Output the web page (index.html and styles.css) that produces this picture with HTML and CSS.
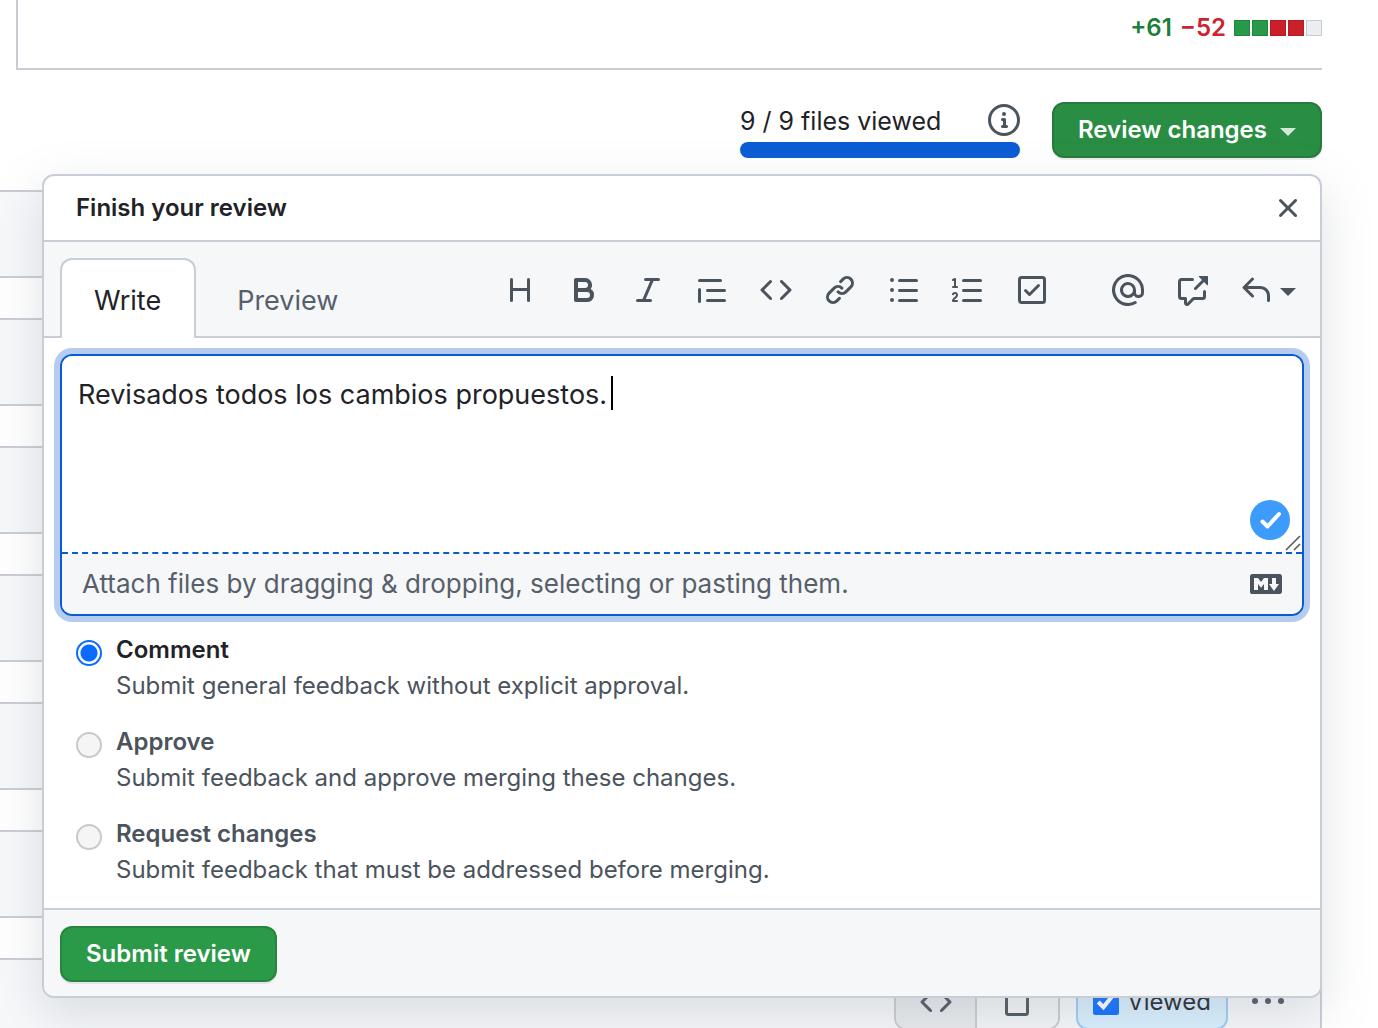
FILE: index.html
```html
<!DOCTYPE html>
<html lang="en">
<head>
<meta charset="utf-8">
<meta name="viewport" content="width=device-width, initial-scale=1">
<title>Finish your review</title>
<link rel="stylesheet" href="styles.css">
</head>
<body>
<main class="page">
  <section class="summary">
    <div class="diffstat">
      <span class="added">+61</span>
      <span class="removed">−52</span>
      <span class="blocks"><i class="block block-add"></i><i class="block block-add"></i><i class="block block-del"></i><i class="block block-del"></i><i class="block"></i></span>
    </div>
  </section>

  <div class="toolbar">
    <div class="progress">
      <div class="progress-text">
        <span class="progress-label">9 / 9 files viewed</span>
        <svg class="icon" viewBox="0 0 16 16"><path d="M0 8a8 8 0 1 1 16 0A8 8 0 0 1 0 8Zm8-6.500a6.500 6.500 0 1 0 0 13 6.500 6.500 0 0 0 0-13ZM6.500 7.750A.75.75 0 0 1 7.250 7h1a.75.75 0 0 1 .75.75v2.750h.25a.75.75 0 0 1 0 1.500h-2a.75.75 0 0 1 0-1.500h.25v-2h-.25a.75.75 0 0 1-.75-.75ZM8 6a1 1 0 1 1 0-2 1 1 0 0 1 0 2Z"/></svg>
      </div>
      <div class="progress-bar"></div>
    </div>
    <button class="btn btn-review" type="button">Review changes<span class="caret"></span></button>
  </div>

  <div class="files">
    <div class="file"></div>
    <div class="file"></div>
    <div class="file"></div>
    <div class="file"></div>
    <div class="file"></div>
    <div class="file"></div>
    <div class="file file-open">
      <div class="view-switch">
        <button class="view-button selected" type="button" aria-label="Source"><svg class="icon" viewBox="0 0 16 16"><path d="m11.280 3.220 4.250 4.250a.75.75 0 0 1 0 1.060l-4.250 4.250a.749.749 0 0 1-1.275-.326.749.749 0 0 1 .215-.734L13.940 8l-3.720-3.720a.749.749 0 0 1 .326-1.275.749.749 0 0 1 .734.215Zm-6.560 0a.751.751 0 0 1 1.042.018.751.751 0 0 1 .018 1.042L2.060 8l3.720 3.720a.749.749 0 0 1-.326 1.275.749.749 0 0 1-.734-.215L.47 8.530a.75.75 0 0 1 0-1.060Z"/></svg></button>
        <button class="view-button" type="button" aria-label="Rendered"><svg class="icon" viewBox="0 0 16 16"><path fill="none" stroke="currentColor" stroke-width="1.500" d="M3.750.75h5.500l4 4v8.500a1 1 0 0 1-1 1h-8.500a1 1 0 0 1-1-1v-11.500a1 1 0 0 1 1-1Z"/></svg></button>
      </div>
      <label class="viewed"><input class="tick" type="checkbox" checked>Viewed</label>
      <button class="tool" type="button" aria-label="More options"><svg class="icon" viewBox="0 0 16 16"><path d="M8 9a1.500 1.500 0 1 0 0-3 1.500 1.500 0 0 0 0 3ZM1.500 9a1.500 1.500 0 1 0 0-3 1.500 1.500 0 0 0 0 3Zm13 0a1.500 1.500 0 1 0 0-3 1.500 1.500 0 0 0 0 3Z"/></svg></button>
    </div>
  </div>

  <form class="dialog">
    <header class="dialog-header">
      <h2 class="dialog-title">Finish your review</h2>
      <button class="tool" type="button" aria-label="Close"><svg class="icon" viewBox="0 0 16 16"><path d="M3.720 3.720a.75.75 0 0 1 1.060 0L8 6.940l3.220-3.220a.749.749 0 0 1 1.275.326.749.749 0 0 1-.215.734L9.060 8l3.220 3.220a.749.749 0 0 1-.326 1.275.749.749 0 0 1-.734-.215L8 9.060l-3.220 3.220a.751.751 0 0 1-1.042-.018.751.751 0 0 1-.018-1.042L6.940 8 3.720 4.780a.75.75 0 0 1 0-1.060Z"/></svg></button>
    </header>

    <div class="tabs">
      <button class="tab tab-active" type="button">Write</button>
      <button class="tab" type="button">Preview</button>
      <div class="tools">
        <div class="tool-group">
          <button class="tool" type="button" aria-label="Heading"><svg class="icon" viewBox="0 0 16 16"><path d="M3.750 2a.75.75 0 0 1 .75.75V7h7V2.750a.75.75 0 0 1 1.500 0v10.500a.75.75 0 0 1-1.500 0V8.500h-7v4.750a.75.75 0 0 1-1.500 0V2.750A.75.75 0 0 1 3.750 2Z"/></svg></button>
          <button class="tool" type="button" aria-label="Bold"><svg class="icon" viewBox="0 0 16 16"><path d="M4 2h4.500a3.501 3.501 0 0 1 2.852 5.530A3.499 3.499 0 0 1 9.500 14H4a1 1 0 0 1-1-1V3a1 1 0 0 1 1-1Zm1 7v3h4.500a1.500 1.500 0 0 0 0-3Zm3.500-2a1.500 1.500 0 0 0 0-3H5v3Z"/></svg></button>
          <button class="tool" type="button" aria-label="Italic"><svg class="icon" viewBox="0 0 16 16"><path d="M6 2.750A.75.75 0 0 1 6.750 2h6.500a.75.75 0 0 1 0 1.500h-2.505l-3.858 9H9.250a.75.75 0 0 1 0 1.500h-6.500a.75.75 0 0 1 0-1.500h2.505l3.858-9H6.750A.75.75 0 0 1 6 2.750Z"/></svg></button>
          <button class="tool" type="button" aria-label="Quote"><svg class="icon" viewBox="0 0 16 16"><path d="M1.750 2.500h10.500a.75.75 0 0 1 0 1.500H1.750a.75.75 0 0 1 0-1.500Zm4 5h8.500a.75.75 0 0 1 0 1.500h-8.500a.75.75 0 0 1 0-1.500Zm0 5h8.500a.75.75 0 0 1 0 1.500h-8.500a.75.75 0 0 1 0-1.500ZM2.500 7.750v6a.75.75 0 0 1-1.500 0v-6a.75.75 0 0 1 1.500 0Z"/></svg></button>
          <button class="tool" type="button" aria-label="Code"><svg class="icon" viewBox="0 0 16 16"><path d="m11.280 3.220 4.250 4.250a.75.75 0 0 1 0 1.060l-4.250 4.250a.749.749 0 0 1-1.275-.326.749.749 0 0 1 .215-.734L13.940 8l-3.720-3.720a.749.749 0 0 1 .326-1.275.749.749 0 0 1 .734.215Zm-6.560 0a.751.751 0 0 1 1.042.018.751.751 0 0 1 .018 1.042L2.060 8l3.720 3.720a.749.749 0 0 1-.326 1.275.749.749 0 0 1-.734-.215L.47 8.530a.75.75 0 0 1 0-1.060Z"/></svg></button>
          <button class="tool" type="button" aria-label="Link"><svg class="icon" viewBox="0 0 16 16"><path d="m7.775 3.275 1.250-1.250a3.500 3.500 0 1 1 4.950 4.950l-2.500 2.500a3.500 3.500 0 0 1-4.950 0 .751.751 0 0 1 .018-1.042.751.751 0 0 1 1.042-.018 1.998 1.998 0 0 0 2.830 0l2.500-2.500a2.002 2.002 0 0 0-2.830-2.830l-1.250 1.250a.751.751 0 0 1-1.042-.018.751.751 0 0 1-.018-1.042Zm-4.690 9.640a1.998 1.998 0 0 0 2.830 0l1.250-1.250a.751.751 0 0 1 1.042.018.751.751 0 0 1 .018 1.042l-1.250 1.250a3.500 3.500 0 1 1-4.950-4.950l2.500-2.500a3.500 3.500 0 0 1 4.950 0 .751.751 0 0 1-.018 1.042.751.751 0 0 1-1.042.018 1.998 1.998 0 0 0-2.830 0l-2.500 2.500a1.998 1.998 0 0 0 0 2.830Z"/></svg></button>
          <button class="tool" type="button" aria-label="Bulleted list"><svg class="icon" viewBox="0 0 16 16"><path d="M5.750 2.500h8.500a.75.75 0 0 1 0 1.500h-8.500a.75.75 0 0 1 0-1.500Zm0 5h8.500a.75.75 0 0 1 0 1.500h-8.500a.75.75 0 0 1 0-1.500Zm0 5h8.500a.75.75 0 0 1 0 1.500h-8.500a.75.75 0 0 1 0-1.500ZM2 14a1 1 0 1 1 0-2 1 1 0 0 1 0 2Zm1-6a1 1 0 1 1-2 0 1 1 0 0 1 2 0ZM2 4a1 1 0 1 1 0-2 1 1 0 0 1 0 2Z"/></svg></button>
          <button class="tool" type="button" aria-label="Numbered list"><svg class="icon" viewBox="0 0 16 16"><path d="M5 3.250a.75.75 0 0 1 .75-.75h8.500a.75.75 0 0 1 0 1.500h-8.500A.75.75 0 0 1 5 3.250Zm0 5a.75.75 0 0 1 .75-.75h8.500a.75.75 0 0 1 0 1.500h-8.500A.75.75 0 0 1 5 8.250Zm0 5a.75.75 0 0 1 .75-.75h8.500a.75.75 0 0 1 0 1.500h-8.500a.75.75 0 0 1-.75-.75ZM.924 10.320a.5.5 0 0 1-.851-.525l.010-.017c.097-.144.215-.273.348-.384.228-.19.588-.392 1.068-.392.468 0 .858.181 1.126.484.259.294.377.673.377 1.038 0 .987-.686 1.495-1.156 1.845l-.047.035c-.303.225-.522.4-.654.597h1.357a.5.5 0 0 1 0 1H.5a.5.5 0 0 1-.5-.5c0-1.005.692-1.520 1.167-1.875l.035-.025c.531-.396.8-.625.8-1.078a.57.57 0 0 0-.128-.376C1.806 10.068 1.695 10 1.500 10a.658.658 0 0 0-.429.163.835.835 0 0 0-.147.157ZM2.003 2.500V6h.503a.5.5 0 0 1 0 1H.5a.5.5 0 0 1 0-1h.503V3.308l-.28.14a.5.5 0 0 1-.446-.895l1.003-.5a.5.5 0 0 1 .723.447Z"/></svg></button>
          <button class="tool" type="button" aria-label="Task list"><svg class="icon" viewBox="0 0 16 16"><path fill-rule="evenodd" d="M2.500 2.750a.25.25 0 0 1 .25-.25h10.500a.25.25 0 0 1 .25.25v10.500a.25.25 0 0 1-.25.25H2.750a.25.25 0 0 1-.25-.25V2.750ZM2.750 1A1.750 1.750 0 0 0 1 2.750v10.500c0 .966.784 1.750 1.750 1.750h10.500A1.750 1.750 0 0 0 15 13.250V2.750A1.750 1.750 0 0 0 13.250 1H2.750Zm9.030 5.280a.75.75 0 0 0-1.060-1.060L6.750 9.190 5.280 7.720a.75.75 0 0 0-1.060 1.060l2 2a.75.75 0 0 0 1.060 0l4.500-4.500Z"/></svg></button>
        </div>
        <div class="tool-group">
          <button class="tool" type="button" aria-label="Mention"><svg class="icon" viewBox="0 0 16 16"><path fill-rule="evenodd" d="M4.750 2.370a6.501 6.501 0 0 0 6.500 11.260.75.75 0 0 1 .75 1.298A7.999 7.999 0 0 1 .989 4.148 8 8 0 0 1 16 7.750v1.500a2.750 2.750 0 0 1-5.072 1.475 3.999 3.999 0 0 1-6.650-4.190A4 4 0 0 1 12 8v1.250a1.250 1.250 0 0 0 2.500 0V7.867a6.500 6.500 0 0 0-9.750-5.496ZM10.500 8a2.500 2.500 0 1 0-5 0 2.500 2.500 0 0 0 5 0Z"/></svg></button>
          <button class="tool" type="button" aria-label="Reference"><svg class="icon" viewBox="0 0 16 16"><path d="M2.750 3.500a.25.25 0 0 0-.25.25v7.500c0 .138.112.25.25.25h2a.75.75 0 0 1 .75.75v2.190l2.720-2.720a.749.749 0 0 1 .53-.22h4.500a.25.25 0 0 0 .25-.25v-2.500a.75.75 0 0 1 1.500 0v2.500A1.750 1.750 0 0 1 13.250 13H9.060l-2.573 2.573A1.458 1.458 0 0 1 4 14.543V13H2.750A1.750 1.750 0 0 1 1 11.250v-7.500C1 2.784 1.784 2 2.750 2h5.500a.75.75 0 0 1 0 1.500ZM16 1.250v4.146a.25.25 0 0 1-.427.177L14.030 4.030l-3.750 3.750a.749.749 0 0 1-1.275-.326.749.749 0 0 1 .215-.734l3.750-3.750-1.543-1.543A.25.25 0 0 1 11.604 1h4.146a.25.25 0 0 1 .25.25Z"/></svg></button>
          <button class="tool" type="button" aria-label="Saved replies"><svg class="icon" viewBox="0 0 16 16"><path d="M6.780 1.970a.75.75 0 0 1 0 1.060L3.810 6h6.440A4.750 4.750 0 0 1 15 10.750v2.500a.75.75 0 0 1-1.500 0v-2.500a3.250 3.250 0 0 0-3.250-3.250H3.810l2.970 2.970a.749.749 0 0 1-.326 1.275.749.749 0 0 1-.734-.215L1.470 7.280a.75.75 0 0 1 0-1.060l4.250-4.250a.75.75 0 0 1 1.060 0Z"/></svg><span class="caret"></span></button>
        </div>
      </div>
    </div>

    <div class="editor">
      <textarea class="comment" aria-label="Review comment" spellcheck="false">Revisados todos los cambios propuestos.</textarea>
      <span class="cursor"></span>
      <svg class="status" viewBox="0 0 40 40"><circle cx="20" cy="20" r="20" fill="#3d9bfc"/><path d="m12.500 21.500 5 5L29 14" fill="none" stroke="#fff" stroke-width="4" stroke-linecap="round" stroke-linejoin="round"/></svg>
      <svg class="grip" viewBox="0 0 16 16"><path d="M1 15 15 1M9 15l6-6" fill="none" stroke="#555" stroke-width="1.500"/></svg>
      <div class="attach">
        <span>Attach files by dragging &amp; dropping, selecting or pasting them.</span>
        <svg class="icon" viewBox="0 0 16 16"><path fill-rule="evenodd" d="M14.850 3H1.150C.52 3 0 3.520 0 4.150v7.690C0 12.480.52 13 1.150 13h13.690c.64 0 1.150-.52 1.150-1.150v-7.700C16 3.520 15.480 3 14.850 3ZM9 11H7V8L5.500 9.920 4 8v3H2V5h2l1.500 2L7 5h2v6Zm2.990.5L9.500 8H11V5h2v3h1.500l-2.510 3.500Z"/></svg>
      </div>
    </div>

    <div class="options">
      <label class="option"><input class="radio" type="radio" name="event" checked><span class="option-text"><strong class="option-name">Comment</strong><span>Submit general feedback without explicit approval.</span></span></label>
      <label class="option"><input class="radio" type="radio" name="event"><span class="option-text"><strong class="option-name">Approve</strong><span>Submit feedback and approve merging these changes.</span></span></label>
      <label class="option"><input class="radio" type="radio" name="event"><span class="option-text"><strong class="option-name">Request changes</strong><span>Submit feedback that must be addressed before merging.</span></span></label>
    </div>

    <footer class="dialog-footer">
      <button class="btn" type="submit">Submit review</button>
    </footer>
  </form>
</main>
</body>
</html>
```
FILE: styles.css
```css
* {
  box-sizing: border-box;
}

body {
  margin: 0;
  background: #fff;
  color: #1f2328;
  font-family: Inter, "Liberation Sans", sans-serif;
  font-size: 24px;
  line-height: 36px;
}

button,
textarea {
  margin: 0;
  font: inherit;
}

.page {
  position: relative;
  height: 100vh;
  padding-right: 56px;
  overflow: hidden;
}

.icon {
  display: block;
  flex: none;
  width: 32px;
  height: 32px;
  fill: currentColor;
  color: #4b535d;
}

.caret {
  border: 8px solid transparent;
  border-top-color: currentColor;
  border-bottom: 0;
}

/* Summary strip */
.summary {
  display: flex;
  justify-content: flex-end;
  height: 70px;
  margin-left: 16px;
  padding-top: 10px;
  border: solid #c8cdd4;
  border-width: 0 0 2px 2px;
}

.diffstat {
  display: flex;
  gap: 8px;
  height: 36px;
  font-weight: 600;
}

.added {
  color: #1a7f37;
}

.removed {
  color: #cf222e;
}

.blocks {
  display: flex;
  align-items: center;
  gap: 2px;
}

.block {
  width: 16px;
  height: 16px;
  border: 1px solid #c9cdd2;
  background: #ebedf0;
}

.block-add {
  border-color: #22863a;
  background: #28994a;
}

.block-del {
  border-color: #b31d28;
  background: #cb1f2a;
}

/* Progress and review button */
.toolbar {
  display: flex;
  justify-content: flex-end;
  gap: 32px;
  padding: 32px 0;
}

.progress {
  width: 280px;
}

.progress-text {
  display: flex;
  justify-content: space-between;
  align-items: center;
  height: 36px;
  margin-bottom: 4px;
}

.progress-label {
  padding-top: 2px;
  font-size: 25px;
}

.progress-bar {
  height: 16px;
  border-radius: 8px;
  background: #0b5cd5;
}

.btn {
  height: 56px;
  padding: 0 24px;
  border: 2px solid #26853e;
  border-radius: 12px;
  background: #2a9a48;
  color: #fff;
  font-weight: 600;
  box-shadow: 0 2px 0 rgba(31, 35, 40, 0.08);
}

.btn-review {
  display: flex;
  align-items: center;
  gap: 13px;
  border-color: #267b3c;
  background: #298e43;
}

.btn-review .caret {
  margin-top: 4px;
  border-top-color: #d4e8d9;
}

/* File list */
.files {
  display: flex;
  flex-direction: column;
  gap: 40px;
}

.file {
  height: 88px;
  border: solid #c8cdd4;
  border-width: 2px 2px 2px 0;
  background: #f6f8fa;
}

.file-open {
  display: flex;
  justify-content: flex-end;
  align-items: center;
  gap: 16px;
  padding-right: 36px;
}

.view-switch {
  display: flex;
  height: 56px;
  overflow: hidden;
  border: 2px solid #c8cbd0;
  border-radius: 12px;
}

.view-button {
  width: 81px;
  padding: 10px 24px;
  border: 0;
  background: #f3f5f7;
}

.view-button.selected {
  border-right: 2px solid #c8cbd0;
  background: #e8eaed;
}

.viewed {
  display: flex;
  align-items: center;
  gap: 8px;
  height: 56px;
  padding: 0 15px;
  margin-right: 8px;
  border: 2px solid #9ecbf5;
  border-radius: 12px;
  background: #d8f0ff;
}

.tick {
  width: 26px;
  height: 26px;
  margin: 0;
  accent-color: #0a6cff;
}

/* Review dialog */
.dialog {
  position: absolute;
  top: 174px;
  right: 56px;
  left: 42px;
  overflow: hidden;
  border: 2px solid #c8cdd6;
  border-radius: 12px;
  background: #fff;
  box-shadow: 0 16px 48px rgba(140, 149, 159, 0.28);
}

.dialog-header {
  display: flex;
  justify-content: space-between;
  align-items: center;
  height: 66px;
  padding: 0 16px 0 32px;
  border-bottom: 2px solid #c8cdd6;
}

.dialog-title {
  margin: 0;
  font-size: 24px;
  font-weight: 600;
}

.tool {
  display: flex;
  align-items: center;
  height: 32px;
  padding: 0;
  border: 0;
  background: none;
  color: #4b535d;
}

.tabs {
  display: flex;
  align-items: flex-end;
  height: 96px;
  padding: 0 24px 0 16px;
  background: #f5f7f9;
  box-shadow: inset 0 -2px #c8cdd6;
}

.tab {
  height: 80px;
  padding: 6px 41px 0;
  border: 0;
  background: none;
  color: #57606a;
  font-size: 27px;
}

.tab-active {
  padding: 4px 33px 0 32px;
  border: 2px solid #c8cdd6;
  border-bottom: 0;
  border-radius: 12px 12px 0 0;
  background: #fff;
  color: #1f2328;
}

.tools {
  display: flex;
  gap: 64px;
  margin: 0 0 32px auto;
}

.tool-group {
  display: flex;
  gap: 32px;
}

.tools .caret {
  margin: 4px 0 0 8px;
}

.editor {
  position: relative;
  margin: 16px 16px 0;
  border: 2px solid #0b5bd0;
  border-radius: 12px;
  box-shadow: 0 0 0 6px #b6ccef;
}

.comment {
  display: block;
  width: 100%;
  height: 198px;
  padding: 19px 16px;
  border: 0;
  border-bottom: 2px dashed #0b5bd0;
  border-radius: 10px 10px 0 0;
  outline: 0;
  background: #fff;
  color: #1f2328;
  font-size: 27px;
  line-height: 40px;
  resize: none;
}

.cursor {
  position: absolute;
  top: 20px;
  left: 549px;
  width: 2px;
  height: 34px;
  background: #000;
}

.status {
  position: absolute;
  top: 144px;
  right: 12px;
  width: 40px;
  height: 40px;
}

.grip {
  position: absolute;
  top: 179px;
  right: 1px;
  width: 16px;
  height: 16px;
}

.attach {
  display: flex;
  justify-content: space-between;
  align-items: center;
  height: 60px;
  padding: 0 20px;
  border-radius: 0 0 10px 10px;
  background: #f5f7f9;
  color: #57606a;
  font-size: 26px;
}

.options {
  display: flex;
  flex-direction: column;
  gap: 20px;
  padding: 16px 32px 20px;
}

.option {
  display: flex;
  gap: 14px;
  color: #4b535d;
}

.radio {
  appearance: none;
  flex: none;
  width: 26px;
  height: 26px;
  margin: 8px 0 0;
  border: 2px solid #c9c9c9;
  border-radius: 50%;
  background: #f5f5f5;
}

.radio:checked {
  border-color: #0a6cff;
  background: radial-gradient(circle, #0a6cff 8px, #fff 9px);
}

.option-text {
  display: flex;
  flex-direction: column;
}

.option-name {
  font-weight: 600;
}

.radio:checked + .option-text .option-name {
  color: #1f2328;
}

.dialog-footer {
  padding: 16px 16px 14px;
  border-top: 2px solid #c8cdd6;
  background: #f5f7f9;
}
```
